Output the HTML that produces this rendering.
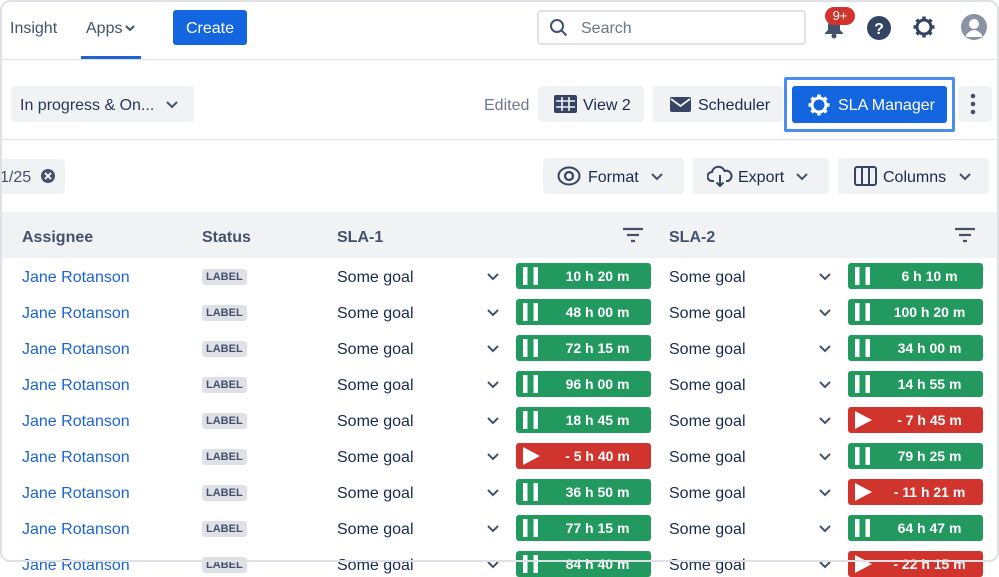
<!DOCTYPE html>
<html><head><meta charset="utf-8"><style>
*{box-sizing:border-box;margin:0;padding:0}
svg{display:block}
body{width:999px;height:562px;overflow:hidden;background:#fff;font-family:"Liberation Sans",Arial,sans-serif;color:#172b4d;position:relative}
.frame{position:absolute;left:0;top:0;width:999px;height:562px;border:2px solid #dfe1e6;border-radius:10px;pointer-events:none;z-index:5}
.a{position:absolute}
.btn{position:absolute;background:#f1f2f4;border-radius:4px;display:flex;align-items:center;font-size:16px;color:#253858;padding-top:3px}
.pill{position:absolute;width:135px;height:26px;border-radius:3px;color:#fff;font-weight:bold;font-size:14px;display:flex;align-items:center}
.g{background:#22995e}.r{background:#d0342c}
.pill .t{position:absolute;left:0;right:0;text-align:center;padding-left:28px}
.pill .ic{position:absolute;left:7px;top:4px}
.name{position:absolute;left:22px;color:#1d64d1;font-size:16px}
.lbl{position:absolute;left:202px;background:#dfe1e6;color:#42526e;font-size:11px;font-weight:bold;padding:2px 4px;border-radius:3px}
.goal{position:absolute;font-size:16px;color:#172b4d}
.chev{position:absolute}
</style></head><body><div class="frame"></div>
<div class="a" style="left:10px;top:20px;font-size:16px;color:#42526e">Insight</div>
<div class="a" style="left:86px;top:20px;font-size:16px;color:#42526e">Apps</div>
<svg class="a" style="left:125px;top:24px" width="10" height="8"><path d="M1 2l4 4 4-4" stroke="#42526e" stroke-width="2" fill="none"/></svg>
<div class="a" style="left:81px;top:56px;width:60px;height:3px;background:#1d64d1"></div>
<div class="a" style="left:173px;top:10px;width:74px;height:35px;background:#1466e0;border-radius:3px;color:#fff;font-size:16px;text-align:center;line-height:37px">Create</div>
<div class="a" style="left:537px;top:10px;width:269px;height:35px;border:2px solid #dfe1e6;border-radius:4px"></div>
<svg class="a" style="left:549px;top:18px" width="20" height="20"><circle cx="8" cy="8" r="6" stroke="#42526e" stroke-width="2" fill="none"/><path d="M12.5 12.5l5 5" stroke="#42526e" stroke-width="2"/></svg>
<div class="a" style="left:581px;top:20px;font-size:16px;color:#6b778c">Search</div>
<svg class="a" style="left:823px;top:17px" width="22" height="22"><path d="M11 2c-4 0-6 3-6 7v4l-3 3v1h18v-1l-3-3V9c0-4-2-7-6-7z" fill="#42526e"/><circle cx="11" cy="19" r="2.5" fill="#42526e"/></svg>
<div class="a" style="left:825px;top:7px;width:30px;height:18px;background:#d0342c;border-radius:9px;color:#fff;font-size:13px;text-align:center;line-height:18px">9+</div>
<svg class="a" style="left:866px;top:15px" width="26" height="26"><circle cx="13" cy="13" r="12" fill="#344563"/><text x="13" y="19" text-anchor="middle" fill="#fff" font-size="16" font-weight="bold" font-family="Liberation Sans">?</text></svg>
<svg class="a" style="left:912px;top:15px" width="24" height="24" viewBox="0 0 24 24"><circle cx="12" cy="12" r="7" fill="none" stroke="#344563" stroke-width="3"/><path d="M12 1.5v4M12 18.5v4M1.5 12h4M18.5 12h4M4.6 4.6l2.8 2.8M16.6 16.6l2.8 2.8M4.6 19.4l2.8-2.8M16.6 7.4l2.8-2.8" stroke="#344563" stroke-width="3.5"/><circle cx="12" cy="12" r="3" fill="#fff"/></svg>
<svg class="a" style="left:960px;top:13px" width="28" height="28"><circle cx="14" cy="14" r="13" fill="#8993a4"/><circle cx="14" cy="11" r="5" fill="#fff"/><path d="M6 22q8-10 16 0v2H6z" fill="#fff"/></svg>
<div class="a" style="left:0;top:59px;width:999px;height:1px;background:#dfe1e6"></div>

<div class="btn" style="left:11px;top:86px;width:183px;height:36px;padding-left:9px">In progress &amp; On...</div>
<svg class="a" style="left:166px;top:101px" width="12" height="8"><path d="M1 1l5 5 5-5" stroke="#42526e" stroke-width="2" fill="none"/></svg>
<div class="a" style="left:484px;top:97px;font-size:16px;color:#6b778c">Edited</div>
<div class="btn" style="left:538px;top:86px;width:106px;height:36px;padding-left:45px;color:#172b4d">View 2</div>
<svg class="a" style="left:554px;top:95px" width="23" height="18"><rect x="0" y="0" width="23" height="18" rx="2" fill="#344563"/><path d="M2 6h19M2 12h19M8 2v14M15 2v14" stroke="#f1f2f4" stroke-width="1.6"/></svg>
<div class="btn" style="left:653px;top:86px;width:130px;height:36px;padding-left:45px;color:#172b4d">Scheduler</div>
<svg class="a" style="left:670px;top:97px" width="21" height="15"><rect width="21" height="15" rx="2" fill="#344563"/><path d="M1 2l9.5 7L20 2" stroke="#f1f2f4" stroke-width="1.8" fill="none"/></svg>
<div class="a" style="left:784px;top:77px;width:171px;height:55px;border:3px solid #4c8ef0;border-radius:2px"></div>
<div class="a" style="left:792px;top:86px;width:155px;height:37px;background:#1466e0;border-radius:3px;color:#fff;font-size:16px;line-height:40px;padding-left:46px">SLA Manager</div>
<svg class="a" style="left:807px;top:93px" width="24" height="24" viewBox="0 0 24 24"><circle cx="12" cy="12" r="7" fill="none" stroke="#fff" stroke-width="3"/><path d="M12 1.5v4M12 18.5v4M1.5 12h4M18.5 12h4M4.6 4.6l2.8 2.8M16.6 16.6l2.8 2.8M4.6 19.4l2.8-2.8M16.6 7.4l2.8-2.8" stroke="#fff" stroke-width="3.5"/><circle cx="12" cy="12" r="3" fill="#1466e0"/></svg>
<div class="btn" style="left:958px;top:86px;width:34px;height:36px"></div>
<svg class="a" style="left:969px;top:93px" width="8" height="22"><circle cx="4" cy="3" r="2.3" fill="#42526e"/><circle cx="4" cy="11" r="2.3" fill="#42526e"/><circle cx="4" cy="19" r="2.3" fill="#42526e"/></svg>
<div class="a" style="left:0;top:139px;width:999px;height:1px;background:#dfe1e6"></div>

<div class="btn" style="left:0;top:159px;width:65px;height:35px;padding-left:0;color:#42526e">1/25</div>
<svg class="a" style="left:40px;top:168px" width="16" height="16"><circle cx="8" cy="8" r="7" fill="#42526e"/><path d="M5 5l6 6M11 5l-6 6" stroke="#fff" stroke-width="2"/></svg>
<div class="btn" style="left:543px;top:158px;width:141px;height:36px;padding-left:45px;color:#172b4d">Format</div>
<svg class="a" style="left:557px;top:165px" width="24" height="22"><ellipse cx="12" cy="11" rx="10.5" ry="8.5" fill="none" stroke="#344563" stroke-width="2"/><circle cx="12" cy="11" r="4" fill="none" stroke="#344563" stroke-width="2.2"/></svg>
<svg class="a" style="left:651px;top:173px" width="12" height="8"><path d="M1 1l5 5 5-5" stroke="#42526e" stroke-width="2" fill="none"/></svg>
<div class="btn" style="left:693px;top:158px;width:136px;height:36px;padding-left:45px;color:#172b4d">Export</div>
<svg class="a" style="left:707px;top:165px" width="26" height="22"><path d="M7 16H5a4.5 4.5 0 0 1 0-9 6.5 6.5 0 0 1 12.5-1A5 5 0 0 1 21 16h-2" fill="none" stroke="#344563" stroke-width="2"/><path d="M13 10v11M9.5 17.5l3.5 3.5 3.5-3.5" fill="none" stroke="#344563" stroke-width="2"/></svg>
<svg class="a" style="left:796px;top:173px" width="12" height="8"><path d="M1 1l5 5 5-5" stroke="#42526e" stroke-width="2" fill="none"/></svg>
<div class="btn" style="left:838px;top:158px;width:151px;height:36px;padding-left:45px;color:#172b4d">Columns</div>
<svg class="a" style="left:854px;top:166px" width="23" height="20"><rect x="1" y="1" width="21" height="18" rx="2" fill="none" stroke="#344563" stroke-width="2"/><path d="M8 1v18M15 1v18" stroke="#344563" stroke-width="2"/></svg>
<svg class="a" style="left:959px;top:173px" width="12" height="8"><path d="M1 1l5 5 5-5" stroke="#42526e" stroke-width="2" fill="none"/></svg>

<div class="a" style="left:0;top:212px;width:999px;height:46px;background:#f1f2f4"></div>
<div class="a" style="left:22px;top:229px;font-size:16px;font-weight:bold;color:#42526e">Assignee</div>
<div class="a" style="left:202px;top:229px;font-size:16px;font-weight:bold;color:#42526e">Status</div>
<div class="a" style="left:337px;top:229px;font-size:16px;font-weight:bold;color:#42526e">SLA-1</div>
<div class="a" style="left:669px;top:229px;font-size:16px;font-weight:bold;color:#42526e">SLA-2</div>
<svg class="a" style="left:622px;top:227px" width="22" height="16"><path d="M1 2h20M5 8h12M9 14h4" stroke="#42526e" stroke-width="2.2"/></svg>
<svg class="a" style="left:954px;top:227px" width="22" height="16"><path d="M1 2h20M5 8h12M9 14h4" stroke="#42526e" stroke-width="2.2"/></svg>

<div id="rows"></div>
<script>
var d=[["g","10 h 20 m","g","6 h 10 m"],["g","48 h 00 m","g","100 h 20 m"],["g","72 h 15 m","g","34 h 00 m"],["g","96 h 00 m","g","14 h 55 m"],["g","18 h 45 m","r","- 7 h 45 m"],["r","- 5 h 40 m","g","79 h 25 m"],["g","36 h 50 m","r","- 11 h 21 m"],["g","77 h 15 m","g","64 h 47 m"],["g","84 h 40 m","r","- 22 h 15 m"]];
var h="";
var pause='<svg class="ic" width="16" height="18"><rect x="0" y="0" width="4.5" height="18" fill="#fff"/><rect x="10.5" y="0" width="4.5" height="18" fill="#fff"/></svg>';
var play='<svg class="ic" width="18" height="18"><path d="M0 0L17 9 0 18z" fill="#fff"/></svg>';
var chev='<svg width="12" height="8"><path d="M1 1l5 5 5-5" stroke="#42526e" stroke-width="2" fill="none"/></svg>';
d.forEach(function(r,i){var c=276+36*i;
h+='<div class="name" style="top:'+(c-7)+'px">Jane Rotanson</div>';
h+='<div class="lbl" style="top:'+(c-7)+'px">LABEL</div>';
h+='<div class="goal" style="left:337px;top:'+(c-7)+'px">Some goal</div>';
h+='<div class="goal" style="left:669px;top:'+(c-7)+'px">Some goal</div>';
h+='<div class="chev" style="left:487px;top:'+(c-3)+'px">'+chev+'</div>';
h+='<div class="chev" style="left:819px;top:'+(c-3)+'px">'+chev+'</div>';
h+='<div class="pill '+r[0]+'" style="left:516px;top:'+(c-13)+'px">'+(r[0]=="g"?pause:play)+'<span class="t">'+r[1]+'</span></div>';
h+='<div class="pill '+r[2]+'" style="left:848px;top:'+(c-13)+'px">'+(r[2]=="g"?pause:play)+'<span class="t">'+r[3]+'</span></div>';
});
document.getElementById("rows").innerHTML=h;
</script>
</body></html>
